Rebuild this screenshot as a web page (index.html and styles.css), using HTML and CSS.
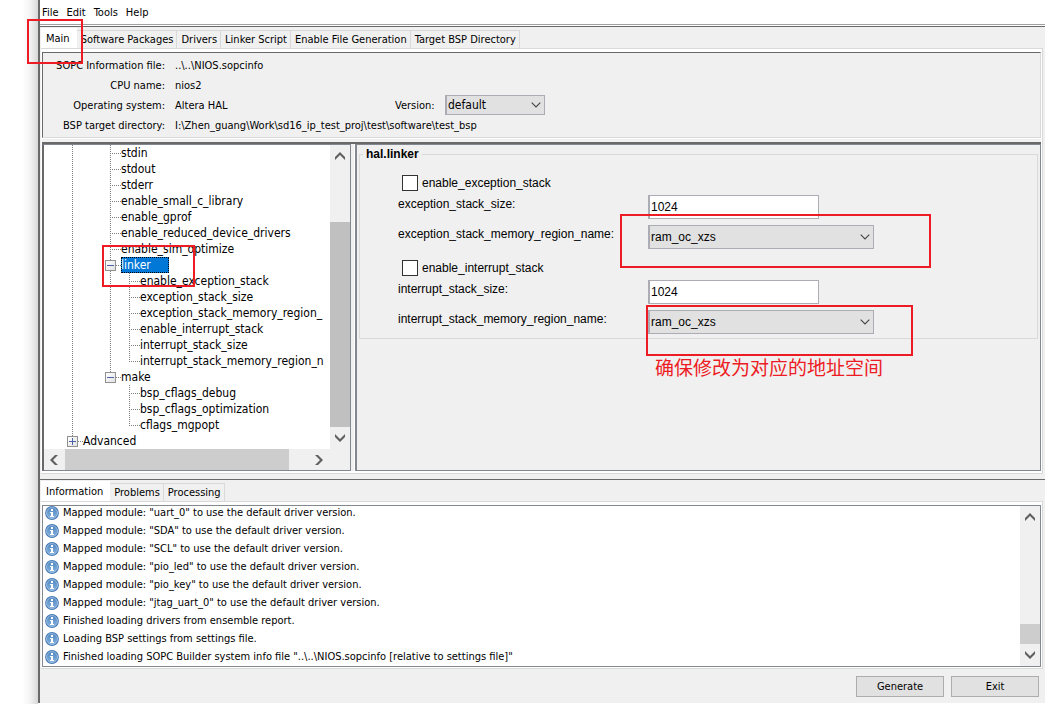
FILE: index.html
```
<!DOCTYPE html>
<html lang="en">
<head>
<meta charset="utf-8">
<title>BSP Editor</title>
<link rel="stylesheet" href="styles.css">
</head>
<body>
<svg class="defs" aria-hidden="true">
  <defs>
    <linearGradient id="ball" x1="0" y1="0" x2="0" y2="1"><stop offset="0" stop-color="#4f86c0"/><stop offset="1" stop-color="#86b2dd"/></linearGradient>
    <symbol id="info" viewBox="0 0 14 14"><circle cx="7" cy="7" r="6.900" fill="#4378b4"/><circle cx="7" cy="7" r="5.500" fill="url(#ball)" stroke="#a9c6e6" stroke-width=".8"/><path d="M6 3h2v2H6zM5 6h3v4h1v1H5v-1h1V7H5z" fill="#fff"/></symbol>
    <symbol id="chev" viewBox="0 0 10 6"><path d="M.7.7 5 5 9.300.7" fill="none" stroke="#444" stroke-width="1.100"/></symbol>
    <symbol id="arrow" viewBox="0 0 10 8"><path d="M0 5 5 0l5 5v3L5 3 0 8z" fill="#606060"/></symbol>
  </defs>
</svg>
<div class="window">
  <nav class="menu"><a href="#">File</a><a href="#">Edit</a><a href="#">Tools</a><a href="#">Help</a></nav>
  <main class="top">
    <div class="tabs" role="tablist">
      <button class="tab active" role="tab">Main</button><button class="tab" role="tab">Software Packages</button><button class="tab" role="tab">Drivers</button><button class="tab" role="tab">Linker Script</button><button class="tab" role="tab">Enable File Generation</button><button class="tab" role="tab">Target BSP Directory</button>
    </div>
    <div class="pane">
      <section class="facts">
        <span class="key">SOPC Information file:</span><span class="wide">..\..\NIOS.sopcinfo</span>
        <span class="key">CPU name:</span><span class="wide">nios2</span>
        <span class="key">Operating system:</span><span>Altera HAL</span>
        <label for="version">Version:</label>
        <span class="combo"><select id="version"><option>default</option></select><svg><use href="#chev"/></svg></span>
        <span class="key">BSP target directory:</span><span class="wide">I:\Zhen_guang\Work\sd16_ip_test_proj\test\software\test_bsp</span>
      </section>
      <div class="split">
        <section class="treebox">
          <div class="treerow">
            <ul class="tree">
              <li><i class="v far"></i><i class="v elbow"></i>stdin</li>
              <li><i class="v far"></i><i class="v elbow"></i>stdout</li>
              <li><i class="v far"></i><i class="v elbow"></i>stderr</li>
              <li><i class="v far"></i><i class="v elbow"></i>enable_small_c_library</li>
              <li><i class="v far"></i><i class="v elbow"></i>enable_gprof</li>
              <li><i class="v far"></i><i class="v elbow"></i>enable_reduced_device_drivers</li>
              <li><i class="v far"></i><i class="v elbow"></i>enable_sim_optimize</li>
              <li><i class="v far"></i><i class="v elbow"><button class="knob" aria-label="Collapse linker"></button></i><span class="picked">linker</span></li>
              <li><i class="v far"></i><i class="v near"></i><i class="v elbow"></i>enable_exception_stack</li>
              <li><i class="v far"></i><i class="v near"></i><i class="v elbow"></i>exception_stack_size</li>
              <li><i class="v far"></i><i class="v near"></i><i class="v elbow"></i>exception_stack_memory_region_</li>
              <li><i class="v far"></i><i class="v near"></i><i class="v elbow"></i>enable_interrupt_stack</li>
              <li><i class="v far"></i><i class="v near"></i><i class="v elbow"></i>interrupt_stack_size</li>
              <li><i class="v far"></i><i class="v near"></i><i class="v elbow last"></i>interrupt_stack_memory_region_n</li>
              <li><i class="v far"></i><i class="v elbow last"><button class="knob" aria-label="Collapse make"></button></i>make</li>
              <li><i class="v far"></i><i class="near"></i><i class="v elbow"></i>bsp_cflags_debug</li>
              <li><i class="v far"></i><i class="near"></i><i class="v elbow"></i>bsp_cflags_optimization</li>
              <li><i class="v far"></i><i class="near"></i><i class="v elbow last"></i>cflags_mgpopt</li>
              <li><i class="v elbow last"><button class="knob plus" aria-label="Expand Advanced"></button></i>Advanced</li>
            </ul>
            <div class="vbar"><svg class="up"><use href="#arrow"/></svg><span class="thumb tall"></span><svg class="down"><use href="#arrow"/></svg></div>
          </div>
          <div class="hbar"><svg class="left"><use href="#arrow"/></svg><span class="thumb"></span><svg class="right"><use href="#arrow"/></svg></div>
        </section>
        <section class="settings">
          <fieldset>
            <legend>hal.linker</legend>
            <div class="group">
              <label class="check"><input type="checkbox">enable_exception_stack</label>
              <label for="es">exception_stack_size:</label><input class="box" id="es" value="1024">
              <label for="er">exception_stack_memory_region_name:</label><span class="combo large"><select id="er"><option>ram_oc_xzs</option></select><svg><use href="#chev"/></svg></span>
            </div>
            <div class="group">
              <label class="check"><input type="checkbox">enable_interrupt_stack</label>
              <label for="is">interrupt_stack_size:</label><input class="box" id="is" value="1024">
              <label for="ir">interrupt_stack_memory_region_name:</label><span class="combo large"><select id="ir"><option>ram_oc_xzs</option></select><svg><use href="#chev"/></svg></span>
            </div>
          </fieldset>
        </section>
      </div>
    </div>
  </main>
  <section class="bottom">
    <div class="tabs" role="tablist">
      <button class="tab active" role="tab">Information</button><button class="tab" role="tab">Problems</button><button class="tab" role="tab">Processing</button>
    </div>
    <div class="logpane">
      <div class="log">
        <ul>
          <li><svg><use href="#info"/></svg>Mapped module: "uart_0" to use the default driver version.</li>
          <li><svg><use href="#info"/></svg>Mapped module: "SDA" to use the default driver version.</li>
          <li><svg><use href="#info"/></svg>Mapped module: "SCL" to use the default driver version.</li>
          <li><svg><use href="#info"/></svg>Mapped module: "pio_led" to use the default driver version.</li>
          <li><svg><use href="#info"/></svg>Mapped module: "pio_key" to use the default driver version.</li>
          <li><svg><use href="#info"/></svg>Mapped module: "jtag_uart_0" to use the default driver version.</li>
          <li><svg><use href="#info"/></svg>Finished loading drivers from ensemble report.</li>
          <li><svg><use href="#info"/></svg>Loading BSP settings from settings file.</li>
          <li><svg><use href="#info"/></svg>Finished loading SOPC Builder system info file "..\..\NIOS.sopcinfo [relative to settings file]"</li>
        </ul>
        <div class="vbar"><svg class="up"><use href="#arrow"/></svg><span class="thumb short"></span><svg class="down"><use href="#arrow"/></svg></div>
      </div>
    </div>
    <footer><button class="push">Generate</button><button class="push">Exit</button></footer>
  </section>
</div>
<div class="mark mark-tab"></div>
<div class="mark mark-node"></div>
<div class="mark mark-first"></div>
<div class="mark mark-second"></div>
<p class="note" lang="zh">确保修改为对应的地址空间</p>
</body>
</html>
```
FILE: styles.css
```
* { box-sizing: border-box; }
body {
  margin: 0;
  min-height: 100vh;
  position: relative;
  display: flex;
  padding: 0 1px 1px 38px;
  background: linear-gradient(to right, #fff 22px, #f4f4f4 30px, #d8d8d8 38px, #fff 38px);
  font: 11px/18px "DejaVu Sans Condensed", "Noto Sans", sans-serif;
  color: #000;
}
button, input, select { font: inherit; color: inherit; margin: 0; }
ul { list-style: none; margin: 0; padding: 0; }
.defs { position: absolute; width: 0; height: 0; }
.window {
  flex: 1;
  min-width: 0;
  display: flex;
  flex-direction: column;
  border-left: 2px solid #696969;
  background: #f0f0f0;
}
.menu {
  display: flex;
  gap: 8px;
  height: 25px;
  padding: 4px 2px 0;
  background: #fff;
  border-bottom: 1px solid #a0a0a0;
}
.menu a { color: #000; text-decoration: none; }
.top {
  display: flex;
  flex-direction: column;
  flex: 1;
  margin-top: 1px;
  padding: 1px 2px 0 1px;
  border-top: 1px solid #696969;
  box-shadow: 0 -1px #fff;
}
.tabs { display: flex; align-items: flex-end; }
.tab {
  height: 18px;
  padding: 0 3px 0 4px;
  border: 1px solid #d9d9d9;
  border-width: 1px 1px 0 0;
  background: #f0f0f0;
  line-height: 17px;
  white-space: nowrap;
}
.tab.active {
  height: 20px;
  padding: 0 6px 0 5px;
  background: #fff;
  border-color: #fff;
}
.pane {
  flex: 1;
  display: flex;
  flex-direction: column;
  border: 1px solid #d9d9d9;
  border-left: 0;
  padding: 3px 1px 2px;
  background: #fff;
}
.facts {
  display: grid;
  grid-template-columns: 122px 210px 40px 100px;
  grid-auto-rows: 20px;
  align-items: center;
  column-gap: 10px;
  padding: 2px 0;
  border: 1px solid #d9d9d9;
  border-top-color: #696969;
  border-left-color: #696969;
  background: #f0f0f0;
  white-space: nowrap;
}
.facts > span:not(.combo), .facts label { padding-top: 1px; }
.key { text-align: right; }
.wide { grid-column: 2 / -1; }
.combo { position: relative; display: block; }
.combo select {
  display: block;
  width: 100%;
  height: 20px;
  padding: 0 1px;
  appearance: none;
  border: 1px solid #acacb4;
  border-left-width: 2px;
  border-radius: 0;
  background: #e1e1e1;
  font-size: 12px;
}
.combo svg { position: absolute; right: 4px; top: 50%; margin-top: -3px; width: 10px; height: 6px; }
.split {
  flex: 1;
  display: flex;
  gap: 4px;
  margin-top: 4px;
  border-top: 2px solid #696969;
  background: linear-gradient(#f0f0f0, #f0f0f0) 309px 0 / 3px 100% no-repeat;
  box-shadow: 0 -3px #f0f0f0;
}
.treebox {
  width: 309px;
  display: flex;
  flex-direction: column;
  border: 1px solid #828790;
  border-left: 2px solid #696969;
  background: #fff;
}
.treerow { display: flex; }
.tree {
  flex: 1;
  min-width: 0;
  overflow: hidden;
  padding-left: 28px;
  font-size: 12px;
}
.tree li { display: flex; height: 16px; line-height: 16px; white-space: nowrap; }
.tree i { flex: none; position: relative; }
.far { width: 38px; }
.near { width: 19px; }
.v { background: repeating-linear-gradient(#808080 0 1px, transparent 1px 2px) 0 0 / 1px 100% no-repeat; }
.elbow {
  width: 11px;
  background:
    repeating-linear-gradient(#808080 0 1px, transparent 1px 2px) 0 0 / 1px 100% no-repeat,
    repeating-linear-gradient(to right, #808080 0 1px, transparent 1px 2px) 0 8px / 100% 1px no-repeat;
}
.elbow.last { background-size: 1px 8px, 100% 1px; }
.knob {
  position: absolute;
  left: -5px;
  top: 3px;
  width: 11px;
  height: 11px;
  padding: 0;
  border: 1px solid #919191;
  background: linear-gradient(#4b63a7, #4b63a7) 1px 4px / 7px 1px no-repeat, linear-gradient(135deg, #fff, #e2e2e2);
}
.knob.plus {
  background: linear-gradient(#4b63a7, #4b63a7) 1px 4px / 7px 1px no-repeat, linear-gradient(#4b63a7, #4b63a7) 4px 1px / 1px 7px no-repeat, linear-gradient(135deg, #fff, #e2e2e2);
}
.picked { width: 48px; background: #0078d7; color: #fff; outline: 1px dotted #000; outline-offset: -1px; }
.vbar {
  display: flex;
  flex-direction: column;
  align-items: center;
  width: 20px;
  padding: 7px 0;
  background: #f0f0f0;
}
.vbar svg, .hbar svg { flex: none; width: 10px; height: 8px; }
.down { transform: rotate(180deg); }
.left { transform: rotate(-90deg); }
.right { transform: rotate(90deg); }
.thumb { background: #cdcdcd; }
.vbar .thumb { width: 100%; }
.tall { background: #c0c0c0; flex: 1; margin: 62px 0 7px; }
.short { height: 20px; margin: auto 0 7px; }
.hbar { display: flex; align-items: center; flex: 1; min-height: 19px; padding: 0 26px 0 5px; background: #f0f0f0; }
.hbar .thumb { flex: 1; align-self: stretch; margin: 0 25px 0 6px; }
.settings {
  flex: 1;
  min-width: 0;
  padding: 1px 2px;
  border: 1px solid #828790;
  border-left-width: 2px;
  background: #f0f0f0;
  font: 12px/18px "Liberation Sans", Arial, sans-serif;
}
fieldset { margin: 0; padding: 13px 8px 4px 38px; border: 1px solid #d9d9d9; min-width: 0; }
legend { margin-left: -35px; padding: 0 3px; line-height: 16px; font-weight: bold; }
.group { display: grid; grid-template-columns: 250px 1fr; row-gap: 6px; white-space: nowrap; }
.group + .group { margin-top: 11px; }
.check { grid-column: 1 / -1; display: flex; align-items: center; gap: 4px; height: 16px; padding-left: 4px; margin-bottom: -2px; }
.check input { appearance: none; width: 16px; height: 16px; border: 1px solid #333; background: #fff; }
.box {
  width: 171px;
  height: 24px;
  padding: 0 1px;
  border: 1px solid #acacb4;
  border-left-width: 2px;
  background: #fff;
}
.large { width: 226px; }
.large select { height: 24px; }
.bottom { margin-top: 5px; border-top: 1px solid #696969; padding: 1px 2px 0 1px; box-shadow: 0 -4px #f0f0f0; }
.logpane { padding: 3px 1px 1px; border: 1px solid #d9d9d9; border-left: 0; background: #fff; }
.log { display: flex; height: 162px; border: 1px solid #828790; }
.log ul { flex: 1; min-width: 0; display: flex; flex-direction: column; justify-content: flex-end; overflow: hidden; padding-left: 2px; }
.log li { display: flex; align-items: center; gap: 4px; flex: none; height: 18px; white-space: nowrap; }
.log svg { flex: none; }
.log li svg { width: 14px; height: 14px; }
footer { display: flex; justify-content: flex-end; gap: 7px; padding: 7px 4px 6px; }
.push { width: 88px; height: 21px; padding: 0; border: 1px solid #adadad; background: #e1e1e1; }
.mark { position: absolute; border: 2px solid #ed1c24; pointer-events: none; }
.mark-tab { left: 27px; top: 19px; width: 56px; height: 45px; }
.mark-node { left: 102px; top: 245px; width: 93px; height: 42px; }
.mark-first { left: 620px; top: 214px; width: 311px; height: 54px; }
.mark-second { left: 646px; top: 305px; width: 267px; height: 51px; }
.note {
  position: absolute;
  left: 655px;
  top: 353px;
  margin: 0;
  color: #ed1c24;
  font: 19px/28px "Noto Sans CJK SC", sans-serif;
}
```
